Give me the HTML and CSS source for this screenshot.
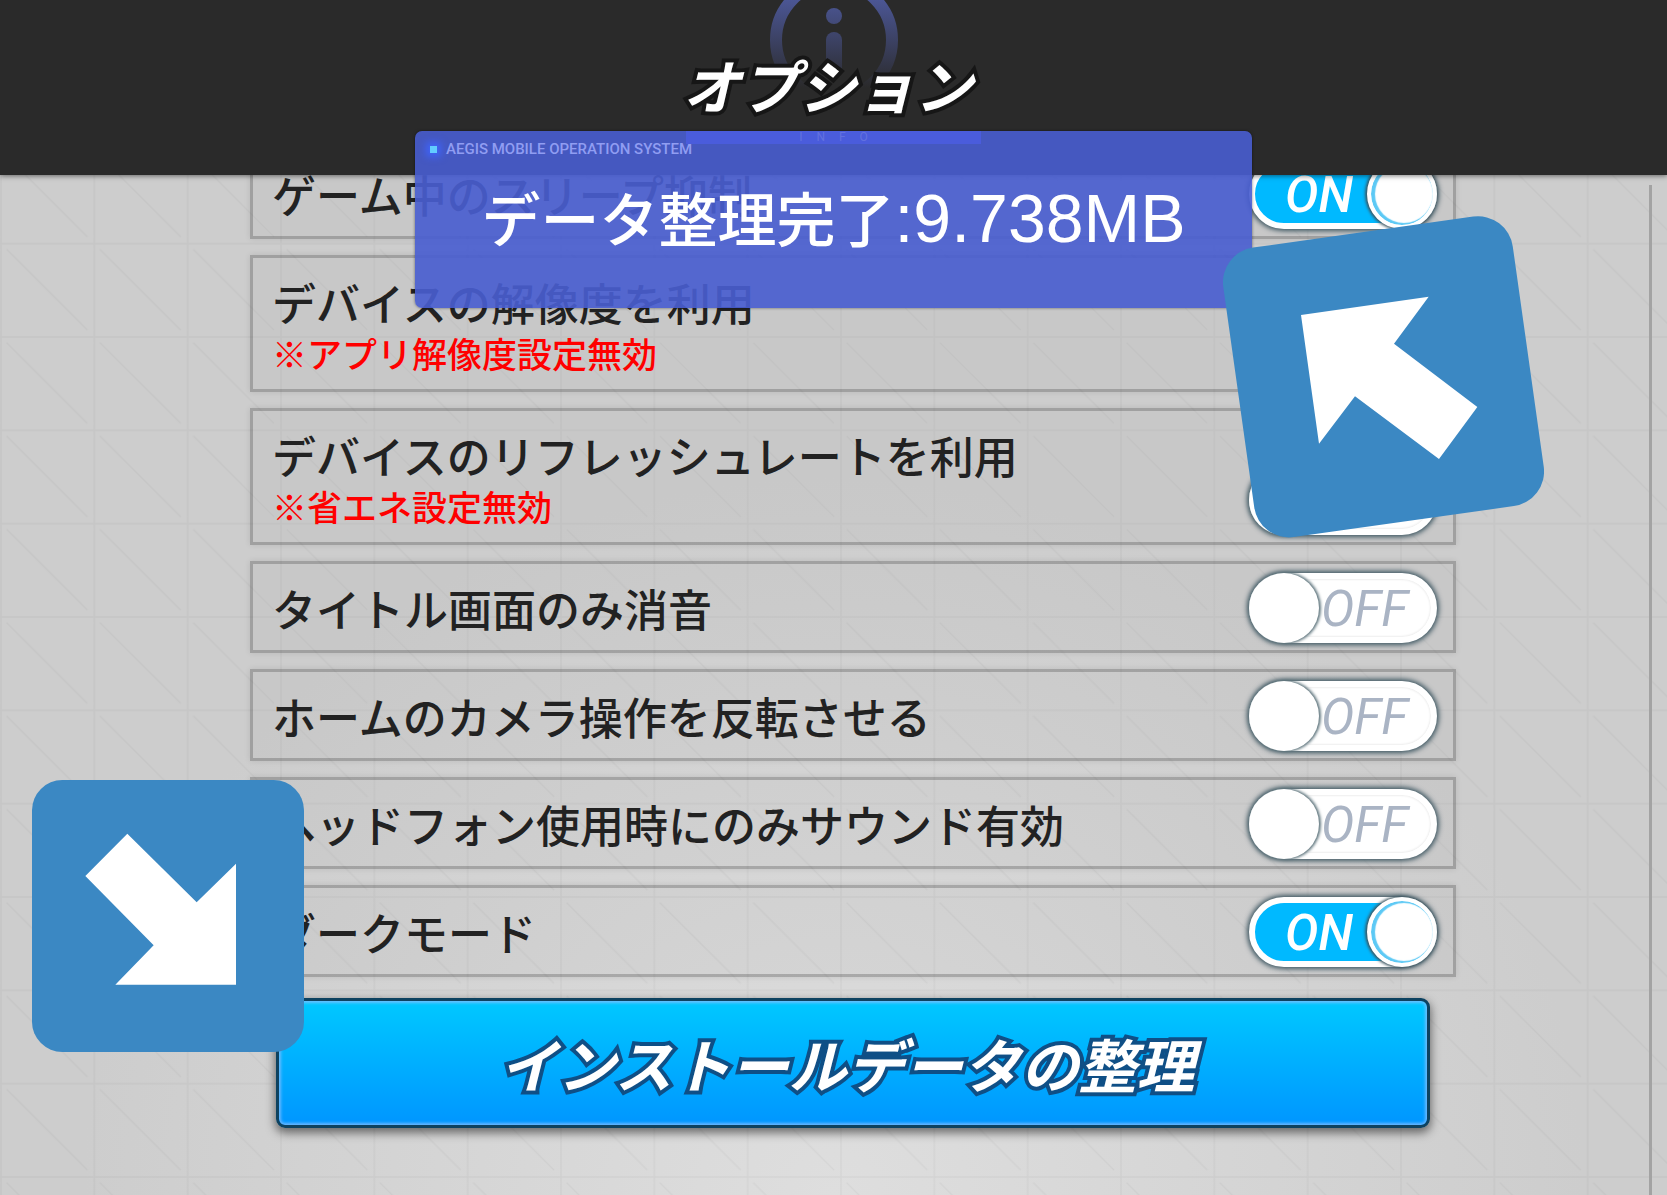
FILE: index.html
```html
<!DOCTYPE html>
<html lang="ja">
<head>
    <meta charset="UTF-8">
    <meta name="viewport" content="width=device-width, initial-scale=1.0">
    <title>オプション</title>
    <link rel="stylesheet" href="styles.css">
</head>
<body>
    <header class="header">
        <svg class="info-icon" viewBox="0 0 128 128" aria-hidden="true">
            <defs>
                <linearGradient id="info-fade" gradientUnits="userSpaceOnUse" x1="0" y1="24" x2="0" y2="112">
                    <stop offset="0" stop-color="#4b5694"/>
                    <stop offset="1" stop-color="#4b5694" stop-opacity="0"/>
                </linearGradient>
            </defs>
            <circle cx="64" cy="64" r="58" fill="none" stroke="url(#info-fade)" stroke-width="12"/>
            <circle cx="64" cy="40" r="8" fill="url(#info-fade)"/>
            <rect x="56" y="56" width="16" height="46" rx="8" fill="url(#info-fade)"/>
        </svg>
        <h1 class="title">オプション</h1>
    </header>

    <main class="main">
        <div class="options">
            <div class="option">
                <label class="option-label" for="sleep">ゲーム中のスリープ抑制</label>
                <span class="toggle">
                    <input type="checkbox" id="sleep" checked>
                    <span class="toggle-text">ON</span>
                </span>
            </div>
            <div class="option option-tall">
                <label class="option-label" for="resolution">デバイスの解像度を利用
                    <small class="note">※アプリ解像度設定無効</small>
                </label>
                <span class="toggle">
                    <input type="checkbox" id="resolution">
                    <span class="toggle-text">OFF</span>
                </span>
            </div>
            <div class="option option-tall">
                <label class="option-label" for="refresh">デバイスのリフレッシュレートを利用
                    <small class="note">※省エネ設定無効</small>
                </label>
                <span class="toggle">
                    <input type="checkbox" id="refresh">
                    <span class="toggle-text">OFF</span>
                </span>
            </div>
            <div class="option">
                <label class="option-label" for="mute">タイトル画面のみ消音</label>
                <span class="toggle">
                    <input type="checkbox" id="mute">
                    <span class="toggle-text">OFF</span>
                </span>
            </div>
            <div class="option">
                <label class="option-label" for="camera">ホームのカメラ操作を反転させる</label>
                <span class="toggle">
                    <input type="checkbox" id="camera">
                    <span class="toggle-text">OFF</span>
                </span>
            </div>
            <div class="option">
                <label class="option-label" for="headphone">ヘッドフォン使用時にのみサウンド有効</label>
                <span class="toggle">
                    <input type="checkbox" id="headphone">
                    <span class="toggle-text">OFF</span>
                </span>
            </div>
            <div class="option">
                <label class="option-label" for="dark">ダークモード</label>
                <span class="toggle">
                    <input type="checkbox" id="dark" checked>
                    <span class="toggle-text">ON</span>
                </span>
            </div>
            <button class="clean-btn" type="button">インストールデータの整理</button>
        </div>
        <div class="scroll-rail"></div>
    </main>

    <div class="toast" role="status">
        <div class="toast-strip">INFO</div>
        <div class="toast-head">AEGIS MOBILE OPERATION SYSTEM</div>
        <p class="toast-message">データ整理完了<span class="toast-size">:9.738MB</span></p>
    </div>

    <svg class="arrow arrow-up" viewBox="0 0 963 965" aria-hidden="true">
        <rect x="43" y="44" width="877" height="877" rx="105" fill="#3b88c3" transform="rotate(-8 481.5 482.5)"/>
        <path fill="#fff" d="M234 297 617 242 513 383 763 573 648 729 396 541 288 683Z"/>
    </svg>
    <svg class="arrow arrow-down" viewBox="0 0 816 816" aria-hidden="true">
        <rect width="816" height="816" rx="91" fill="#3b88c3"/>
        <path fill="#fff" d="M286 161 494 367 612 251V614H250L365 496 160 288Z"/>
    </svg>

    <script>
        // Keep the ON / OFF text in step with the switch
        document.querySelectorAll('.toggle input').forEach(input => {
            input.addEventListener('change', () => {
                input.nextElementSibling.textContent = input.checked ? 'ON' : 'OFF';
            });
        });
    </script>
</body>
</html>
```
FILE: styles.css
```css
* {
    box-sizing: border-box;
}
body {
    position: relative;
    display: flex;
    flex-direction: column;
    min-height: 100vh;
    margin: 0;
    overflow: hidden;
    font-family: "Noto Sans CJK JP", sans-serif;
    color: #222;
    /* three grid cells per tile, each with its diagonal */
    background:
        url("data:image/svg+xml,%3Csvg xmlns='http://www.w3.org/2000/svg' width='280' height='280' viewBox='0 0 840 840'%3E%3Cdefs%3E%3Cpattern id='p' width='280' height='280' patternUnits='userSpaceOnUse'%3E%3Cpath d='M3 0V280M0 3H280M20 20 262 262' fill='none' stroke='%23000' stroke-opacity='.035' stroke-width='4'/%3E%3C/pattern%3E%3C/defs%3E%3Crect width='840' height='840' fill='url(%23p)'/%3E%3C/svg%3E") 0 56px / 280px 280px,
        radial-gradient(ellipse 45% 60% at 50% 100%, #dedede, #cdcdcd);
}

.header {
    position: relative;
    z-index: 2;
    display: flex;
    justify-content: center;
    height: 175px;
    background: #2a2a2a;
    box-shadow: 0 1px 5px rgba(0, 0, 0, 0.5);
}
.info-icon {
    position: absolute;
    top: -24px;
    left: 50%;
    width: 128px;
    margin-left: -64px;
}
.title,
.clean-btn {
    font-size: 58px;
    line-height: 84px;
    font-weight: 700;
    font-style: italic;
    color: #fff;
    paint-order: stroke fill;
}
.title {
    position: relative;
    margin: 42px 0 0;
    padding-right: 12px;
    -webkit-text-stroke: 8px #161616;
}

.main {
    display: flex;
    flex: 1;
}
.options {
    display: flex;
    flex: 1;
    flex-direction: column;
    gap: 16px;
    margin: -28px 193px 0 15%;
}
.option {
    display: flex;
    align-items: center;
    justify-content: space-between;
    min-height: 92px;
    padding: 9px 16px 7px 19px;
    border: 3px solid rgba(0, 0, 0, 0.2);
    background: rgba(0, 0, 0, 0.02);
    box-shadow: 0 0 6px rgba(0, 0, 0, 0.1);
}
.option-tall {
    align-items: flex-start;
    min-height: 137px;
    padding-top: 17px;
}
.option-label {
    font-size: 44px;
    line-height: 54px;
    font-weight: 500;
}
.note {
    display: block;
    font-size: 35px;
    line-height: 48px;
    color: #f00;
}

.toggle {
    position: relative;
    align-self: flex-end;
    flex: none;
    width: 188px;
    height: 70px;
    border-radius: 35px;
    background: #fff;
    border: 6px solid #fff;
    box-shadow: inset 0 0 2px 1px #eee, 0 0 5px 2px #3c5560;
}
.toggle:has(:checked) {
    background: #00b9ff;
    box-shadow: 0 0 5px 2px #3c5560;
}
.toggle input {
    position: absolute;
    top: -6px;
    left: -6px;
    z-index: 1;
    appearance: none;
    width: 70px;
    height: 70px;
    margin: 0;
    border-radius: 50%;
    background: #fff;
    box-shadow: 1px 0 3px 1px #60767e;
    cursor: pointer;
}
.toggle input:checked {
    left: auto;
    right: -6px;
    border: 4px solid #fff;
    box-shadow: inset 2px 0 1px 2px #5cc9f5, -1px 0 3px 1px #3c5560;
}
.toggle-text {
    display: block;
    padding: 0 18px 0 66px;
    font-family: Roboto, sans-serif;
    font-size: 50px;
    line-height: 60px;
    font-style: italic;
    font-weight: 400;
    color: #aab4c4;
}
.toggle input:checked + .toggle-text {
    padding-left: 30px;
    font-weight: 500;
    color: #fff;
}

.clean-btn {
    margin: 5px 26px 0;
    padding: 20px 12px 20px 0;
    font-family: inherit;
    border: 3px solid #0d4260;
    border-radius: 9px;
    background: linear-gradient(#00c8ff, #0096ff);
    box-shadow: inset 0 0 3px 2px rgba(130, 190, 255, 0.8), 0 4px 10px 1px rgba(0, 0, 0, 0.5);
    -webkit-text-stroke: 8px #0f4f86;
    cursor: pointer;
}

.scroll-rail {
    width: 3px;
    margin: 10px 15px 0 0;
    background: #a3a3a3;
}

.toast {
    position: absolute;
    top: 131px;
    left: 415px;
    right: 415px;
    z-index: 3;
    height: 177px;
    border-radius: 7px;
    background: rgba(73, 93, 208, 0.91);
    box-shadow: 0 0 3px rgba(0, 0, 0, 0.5);
}
.toast-strip {
    position: absolute;
    top: 0;
    left: 271px;
    right: 271px;
    height: 13px;
    background: #4a5cdc;
    overflow: hidden;
    font: 12px/13px Roboto, sans-serif;
    letter-spacing: 14px;
    text-indent: 14px;
    text-align: center;
    color: #6271df;
}
.toast-head {
    display: flex;
    align-items: center;
    gap: 9px;
    padding: 8px 15px 0;
    font: 500 15px/20px Roboto, sans-serif;
    color: #909df2;
}
.toast-head::before {
    content: "";
    width: 7px;
    height: 7px;
    background: #62ccff;
    box-shadow: 0 0 7px 4px #3f62f5;
}
.toast-message {
    margin: 16px 0 0;
    font-size: 59px;
    line-height: 84px;
    font-weight: 500;
    text-align: center;
    white-space: nowrap;
    color: #fff;
}
.toast-size {
    font-family: "Liberation Sans", sans-serif;
    font-size: 68px;
    font-weight: 400;
}

.arrow {
    position: absolute;
    z-index: 4;
}
.arrow-up {
    top: 216px;
    right: 123px;
    width: 321px;
}
.arrow-down {
    top: 780px;
    left: 32px;
    width: 272px;
}
```
